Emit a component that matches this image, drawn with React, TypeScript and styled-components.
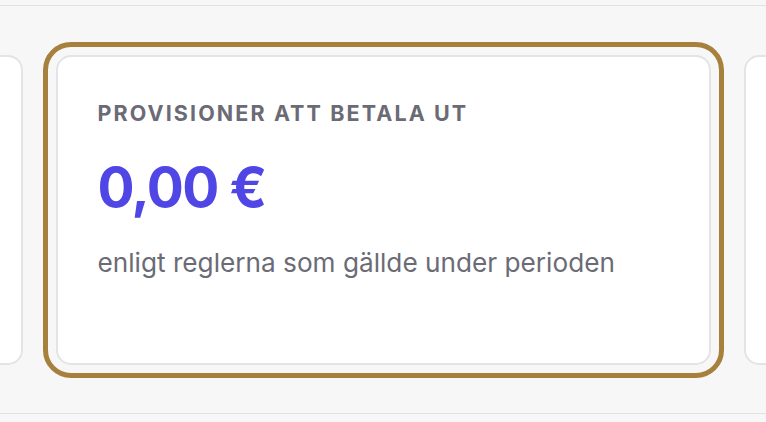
import React from "react";
import styled, { createGlobalStyle } from "styled-components";

const Global = createGlobalStyle`
  html, body { margin: 0; padding: 0; background: #f7f7f7; }
  body { font-family: Inter, "Noto Sans", sans-serif; }
`;

const Page = styled.div`
  width: 766px;
  height: 422px;
  background: #f7f7f7;
  padding-top: 5px;
  box-sizing: border-box;
  overflow: hidden;
`;

const Strip = styled.div`
  border-top: 1px solid #e2e2e2;
  border-bottom: 1px solid #e2e2e2;
  height: 409px;
  box-sizing: border-box;
  display: flex;
  justify-content: center;
  gap: 33px;
  padding-top: 49px;
  overflow: hidden;
`;

const Card = styled.div<{ $active?: boolean }>`
  flex: 0 0 655px;
  height: 310px;
  box-sizing: border-box;
  background: #fff;
  border: 2px solid #e4e4e7;
  border-radius: 15px;
  padding: 43px 40px 0;
  outline: ${(p) => (p.$active ? "5px solid #a8803d" : "none")};
  outline-offset: 8px;
`;

const Label = styled.div`
  font-size: 21.5px;
  line-height: 26px;
  font-weight: 700;
  letter-spacing: 2.1px;
  color: #6b6b75;
  text-transform: uppercase;
  white-space: nowrap;
`;

const Amount = styled.div`
  margin-top: 31px;
  font-size: 55px;
  line-height: 60px;
  font-weight: 700;
  color: #4f46e5;
  letter-spacing: -1.5px;
`;

const Note = styled.div`
  margin-top: 30px;
  font-size: 26.2px;
  line-height: 32px;
  color: #6b6b75;
  white-space: nowrap;
`;

export default function App() {
  return (
    <Page>
      <Global />
      <Strip>
        <Card />
        <Card $active>
          <Label>Provisioner att betala ut</Label>
          <Amount>0,00 €</Amount>
          <Note>enligt reglerna som gällde under perioden</Note>
        </Card>
        <Card />
      </Strip>
    </Page>
  );
}
